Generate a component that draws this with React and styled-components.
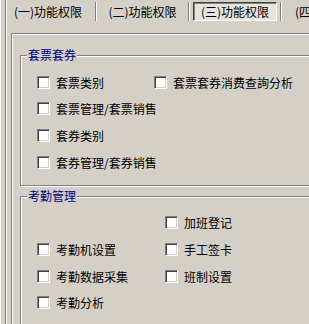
import styled, { createGlobalStyle } from "styled-components"

const GlobalStyle = createGlobalStyle`
  html, body {
    margin: 0;
    padding: 0;
    background: #d4d0c8;
  }
  body {
    font-family: "Noto Sans CJK SC", "Liberation Sans", sans-serif;
    font-size: 12px;
    color: #000;
    overflow: hidden;
  }
`

const tabs = ["(一)功能权限", "(二)功能权限", "(三)功能权限", "(四)功能权限"]
const tabWidths = [95, 92, 91, 94]

const groups = [
  {
    title: "套票套券",
    col: 117,
    rows: [
      ["套票类别", "套票套券消费查詢分析"],
      ["套票管理/套票销售", null],
      ["套券类别", null],
      ["套券管理/套券销售", null],
    ],
  },
  {
    title: "考勤管理",
    col: 128,
    rows: [
      [null, "加班登记"],
      ["考勤机设置", "手工签卡"],
      ["考勤数据采集", "班制设置"],
      ["考勤分析", null],
    ],
  },
]

export default function App() {
  return (
    <>
      <GlobalStyle />
      <Window>
        <Frame>
          <TabBar>
            {tabs.map((t, i) => (
              <Tab key={t} $w={tabWidths[i]} $last={i === tabs.length - 1}>
                <TabLabel $active={i === 2}>{t}</TabLabel>
              </Tab>
            ))}
          </TabBar>
          <Page>
            {groups.map((g) => (
              <GroupBox key={g.title}>
                <Legend>{g.title}</Legend>
                <Grid $col={g.col}>
                  {g.rows.map((r, ri) =>
                    r.map((item, ci) => (
                      <Cell key={ri + "-" + ci}>
                        {item && (
                          <>
                            <Check />
                            <span>{item}</span>
                          </>
                        )}
                      </Cell>
                    ))
                  )}
                </Grid>
              </GroupBox>
            ))}
          </Page>
        </Frame>
      </Window>
    </>
  )
}

const Window = styled.div`
  width: 340px;
  height: 324px;
  padding-left: 1px;
  box-sizing: border-box;
  border-left: 1px solid #fff;
`
const Frame = styled.div`
  height: 100%;
  margin-left: 3px;
  border-left: 1px solid #808080;
  box-shadow: inset 1px 0 0 #fff;
  padding-top: 2px;
  box-sizing: border-box;
`
const TabBar = styled.div`
  display: flex;
  height: 19px;
  margin-left: -5px;
`
const Tab = styled.div`
  flex: 0 0 ${(p) => p.$w}px;
  display: flex;
  align-items: stretch;
  justify-content: center;
  padding: 0 3px;
  box-sizing: border-box;
  border-right: ${(p) => (p.$last ? "none" : "1px solid #808080")};
  box-shadow: ${(p) => (p.$last ? "none" : "1px 0 0 #fff")};
  margin-right: 1px;
  white-space: nowrap;
`
const TabLabel = styled.div`
  flex: 1;
  display: flex;
  align-items: center;
  justify-content: center;
  box-sizing: border-box;
  border: 1px solid;
  border-color: ${(p) => (p.$active ? "#404040 #fff #fff #404040" : "transparent")};
  box-shadow: ${(p) => (p.$active ? "inset 1px 1px 0 #808080" : "none")};
  background: ${(p) => (p.$active ? "#e6e3dd" : "transparent")};
  line-height: 12px;
`
const Page = styled.div`
  margin-top: 12px;
  margin-left: 5px;
  height: 100%;
  border-top: 1px solid #808080;
  border-left: 1px solid #808080;
  box-shadow: inset 1px 1px 0 #fff;
  padding: 21px 0 0 8px;
  box-sizing: border-box;
  display: flex;
  flex-direction: column;
  gap: 10px;
`
const GroupBox = styled.div`
  position: relative;
  width: 320px;
  border: 1px solid #808080;
  box-shadow: 1px 1px 0 #fff, inset 1px 1px 0 #fff;
  padding: 13px 0 9px 16px;
`
const Legend = styled.span`
  position: absolute;
  top: -8px;
  left: 6px;
  padding: 0 1px;
  background: #d4d0c8;
  color: #000080;
  line-height: 14px;
`
const Grid = styled.div`
  display: grid;
  grid-template-columns: ${(p) => p.$col}px 1fr;
  grid-auto-rows: 26.67px;
`
const Cell = styled.div`
  display: flex;
  align-items: center;
  gap: 6px;
  white-space: nowrap;
`
const Check = styled.span`
  flex: 0 0 13px;
  width: 13px;
  height: 13px;
  box-sizing: border-box;
  background: #fff;
  border: 1px solid;
  border-color: #808080 #fff #fff #808080;
  box-shadow: inset 1px 1px 0 #404040, inset -1px -1px 0 #d4d0c8;
`
